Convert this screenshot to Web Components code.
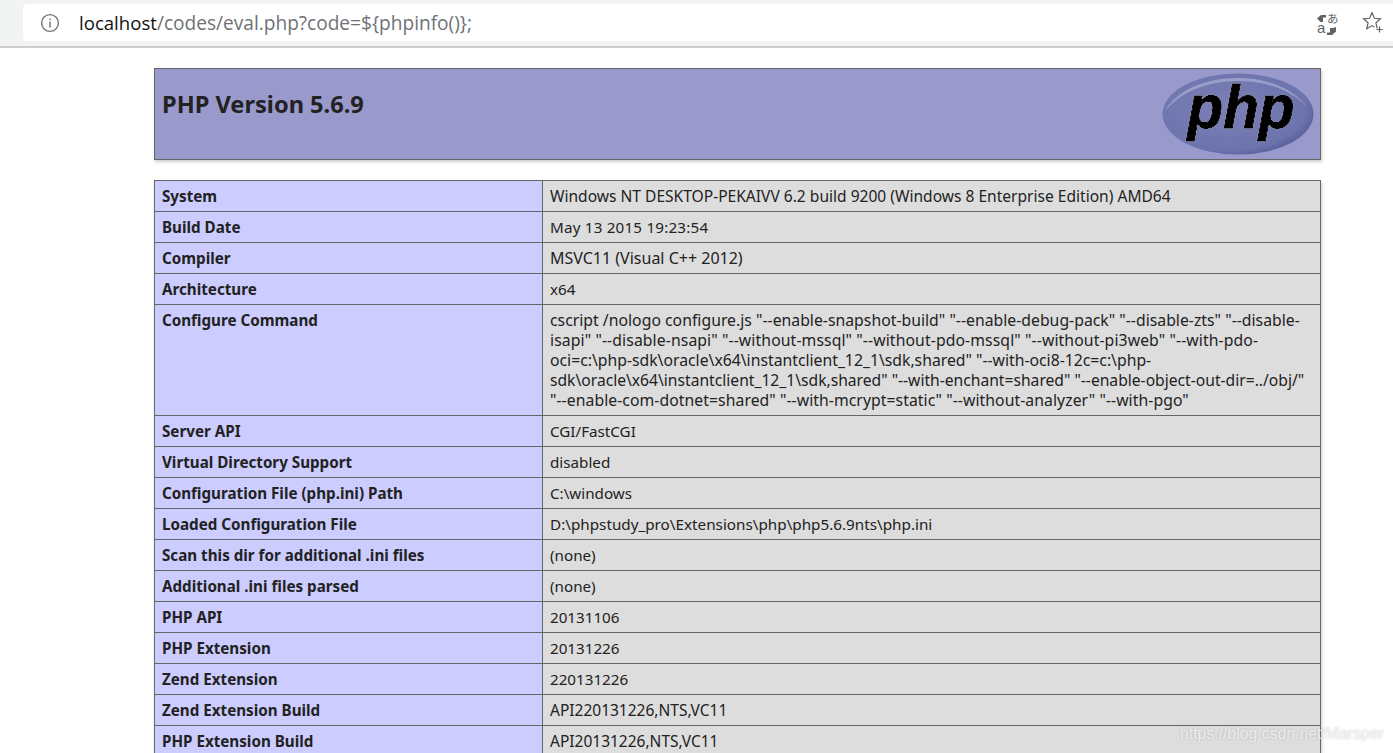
<!DOCTYPE html>
<html><head><meta charset="utf-8"><style>
html,body{margin:0;padding:0;background:#fff;height:753px;overflow:hidden;font-family:"Noto Sans",sans-serif;}
</style></head><body>
<browser-frame url-host="localhost" url-path="/codes/eval.php?code=${phpinfo()};">
<php-header version="PHP Version 5.6.9"></php-header>
<php-table>
<php-row label="System" fs="15.57">Windows NT DESKTOP-PEKAIVV 6.2 build 9200 (Windows 8 Enterprise Edition) AMD64</php-row>
<php-row label="Build Date" fs="15.2" ls=".2">May 13 2015 19:23:54</php-row>
<php-row label="Compiler" fs="16">MSVC11 (Visual C++ 2012)</php-row>
<php-row label="Architecture">x64</php-row>
<php-row label="Configure Command" fs="15.75"><span style="letter-spacing:.02px">cscript /nologo configure.js "--enable-snapshot-build" "--enable-debug-pack" "--disable-zts" "--disable-</span><br><span style="letter-spacing:.1px">isapi" "--disable-nsapi" "--without-mssql" "--without-pdo-mssql" "--without-pi3web" "--with-pdo-</span><br>oci=c:\php-sdk\oracle\x64\instantclient_12_1\sdk,shared" "--with-oci8-12c=c:\php-<br><span style="font-size:15.65px">sdk\oracle\x64\instantclient_12_1\sdk,shared" "--with-enchant=shared" "--enable-object-out-dir=../obj/"</span><br><span style="letter-spacing:.06px">"--enable-com-dotnet=shared" "--with-mcrypt=static" "--without-analyzer" "--with-pgo"</span></php-row>
<php-row label="Server API">CGI/FastCGI</php-row>
<php-row label="Virtual Directory Support">disabled</php-row>
<php-row label="Configuration File (php.ini) Path">C:\windows</php-row>
<php-row label="Loaded Configuration File" fs="15.25">D:\phpstudy_pro\Extensions\php\php5.6.9nts\php.ini</php-row>
<php-row label="Scan this dir for additional .ini files">(none)</php-row>
<php-row label="Additional .ini files parsed">(none)</php-row>
<php-row label="PHP API">20131106</php-row>
<php-row label="PHP Extension">20131226</php-row>
<php-row label="Zend Extension">220131226</php-row>
<php-row label="Zend Extension Build" fs="15.5">API220131226,NTS,VC11</php-row>
<php-row label="PHP Extension Build" fs="15.5">API20131226,NTS,VC11</php-row>
</php-table>
</browser-frame>
<script>
function def(name, html){
  customElements.define(name, class extends HTMLElement{
    connectedCallback(){
      if(this.shadowRoot) return;
      const r=this.attachShadow({mode:'open'});
      r.innerHTML=html(this);
    }
  });
}
def('browser-frame', el=>`<style>
:host{display:block;height:753px;overflow:hidden;position:relative;color:#222;font-size:15px}
.bar{background:#f2f3f3;border-bottom:2px solid #cdcdcd;padding:4px 0 5px 23px;box-sizing:border-box;height:48px;display:flex}
.omni{flex:1;background:#fff;border-radius:4px 0 0 4px;display:flex;align-items:center;height:37px;padding-left:17px}
.url{margin-left:19px;font:19.1px "Open Sans",sans-serif;color:#6e7276;white-space:nowrap;flex:1}
.url b{font-weight:400;color:#111;font-size:18.6px}
.icons{display:flex;gap:21px;align-items:center;padding-right:9px}
.page{padding:20px 72px 0 154px;display:flex;flex-direction:column;gap:20px}
.wm{position:absolute;left:1180px;top:725px;font:15.8px "Liberation Sans",sans-serif;color:rgba(255,255,255,.72);text-shadow:0 0 2px rgba(110,110,110,.4);white-space:nowrap}
</style>
<div class="bar"><div class="omni">
<svg width="20" height="20" viewBox="0 0 20 20"><circle cx="10" cy="10" r="8.4" fill="none" stroke="#757575" stroke-width="1.4"/><rect x="9.3" y="8.6" width="1.5" height="6" fill="#757575"/><rect x="9.3" y="5.6" width="1.5" height="1.6" fill="#757575"/></svg>
<div class="url"><b>${el.getAttribute('url-host')}</b>${el.getAttribute('url-path')}</div>
<div class="icons">
<svg width="24" height="30" viewBox="0 0 24 30" fill="#5f6368"><path d="M2 10.5l4-3.5h5v2.5H8v4.5H5.5z"/><path d="M21 19v4.5l-4 3.5h-5v-2.5h3V20h3z" /><text x="12" y="15" font-family="Noto Sans CJK JP" font-size="11.5" fill="#5f6368">あ</text><text x="2" y="25" font-family="Liberation Sans" font-size="15" fill="#5f6368">a</text></svg>
<svg width="24" height="30" viewBox="0 0 24 30" fill="none" stroke="#5f6368" stroke-width="1.2"><path d="M17.2 20.4l-1.3-5.6 4.6-4-6.1-.5L12 4.8 9.6 10.3l-6.1.5 4.6 4-1.4 6 5.3-3.2 2.4 1.4"/><path d="M16.5 21.5h6M19.5 18.5v6"/></svg>
</div></div></div>
<div class="page"><slot></slot></div>
<div class="wm">https://blog.csdn.net/Marsper</div>`);
def('php-header', el=>`<style>
:host{display:flex;justify-content:space-between;height:92px;box-sizing:border-box;background:#99c;border:1px solid #666;box-shadow:1px 2px 3px #ccc;padding:0 6px 0 7px}
h1{margin:18px 0 0;font:700 23.6px/34px "Noto Sans",sans-serif;color:#222}
svg{display:block;overflow:visible}
</style><h1>${el.getAttribute('version')}</h1>
<svg width="152" height="90" viewBox="0 0 152 90">
<defs><radialGradient id="g" cx=".42" cy=".42" r=".68"><stop offset="0" stop-color="#7b81b7"/><stop offset=".78" stop-color="#6d73ac"/><stop offset="1" stop-color="#4a5190"/></radialGradient>
<filter id="h" x="-10%" y="-10%" width="120%" height="120%"><feDropShadow dx="0" dy="0" stdDeviation=".7" flood-color="#d8daf0"/></filter></defs>
<ellipse cx="76" cy="45" rx="75.5" ry="40.5" fill="url(#g)"/>
<path d="M3 42C14 22 42 9 76 9c30 0 56 11 70 30C130 21 104 12 76 12 44 12 18 24 3 42z" fill="#a6abd2" opacity=".75"/>
<text x="79" y="59" text-anchor="middle" font-family="Liberation Sans" font-weight="700" font-style="italic" font-size="62" textLength="107" lengthAdjust="spacingAndGlyphs" fill="#000" stroke="#000" stroke-width="1.4" filter="url(#h)">php</text>
</svg>`);
def('php-table', el=>`<style>
:host{display:block;border:solid #666;border-width:1px 1px 0;box-shadow:1px 2px 3px #ccc}
</style><slot></slot>`);
def('php-row', el=>`<style>
:host{display:grid;grid-template-columns:388px minmax(0,1fr);border-bottom:1px solid #666;line-height:20px;color:#222}
.e,.v{padding:5px 6px 5px 7px}
.e{background:#ccf;font-weight:700;font-size:15.2px;border-right:1px solid #666}
.v{background:#ddd;white-space:nowrap;font-size:${el.getAttribute('fs')||15.2}px;letter-spacing:${el.getAttribute('ls')||0}px}
</style><div class="e">${el.getAttribute('label')}</div><div class="v"><slot></slot></div>`);
</script>
</body></html>
